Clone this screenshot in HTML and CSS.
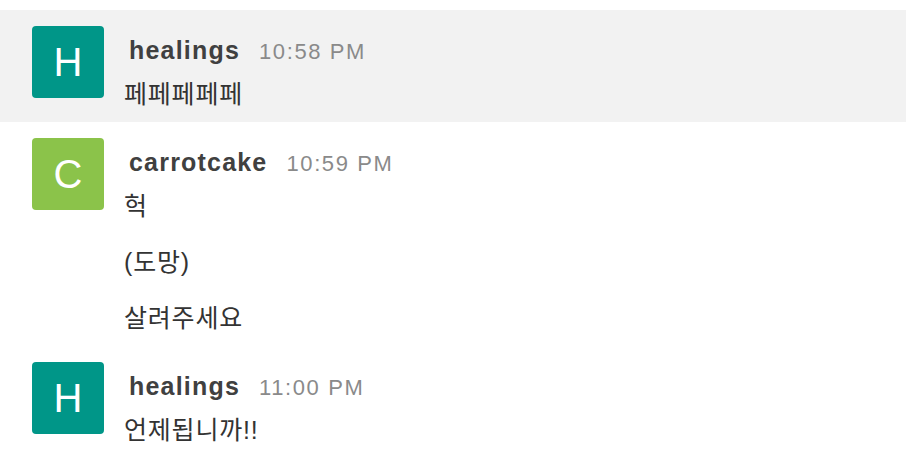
FILE: index.html
```html
<!DOCTYPE html>
<html lang="ko">
<head>
<meta charset="utf-8">
<link rel="stylesheet" href="styles.css">
</head>
<body>
<div class="feed">
  <div class="group hover">
    <div class="avatar teal">H</div>
    <div class="content">
      <div class="header"><span class="name">healings</span><span class="time">10:58 PM</span></div>
      <div class="line">페페페페페</div>
    </div>
  </div>
  <div class="group">
    <div class="avatar green">C</div>
    <div class="content">
      <div class="header"><span class="name">carrotcake</span><span class="time">10:59 PM</span></div>
      <div class="line">헉</div>
      <div class="line">(도망)</div>
      <div class="line">살려주세요</div>
    </div>
  </div>
  <div class="group">
    <div class="avatar teal">H</div>
    <div class="content">
      <div class="header"><span class="name">healings</span><span class="time">11:00 PM</span></div>
      <div class="line">언제됩니까!!</div>
    </div>
  </div>
</div>
</body>
</html>
```
FILE: styles.css
```css
html, body {
  margin: 0;
  padding: 0;
  background: #ffffff;
}
body {
  font-family: "Liberation Sans", "Noto Sans CJK KR", sans-serif;
  color: #333333;
}
.feed {
  padding-top: 10px;
}
.group {
  display: flex;
  gap: 20px;
  padding: 16px 0 8px 32px;
}
.group.hover {
  background: #f2f2f2;
}
.avatar {
  flex: 0 0 72px;
  width: 72px;
  height: 72px;
  border-radius: 4px;
  color: #ffffff;
  font-size: 40px;
  line-height: 72px;
  text-align: center;
}
.avatar.teal { background: #009688; }
.avatar.green { background: #8bc34a; }
.content {
  flex: 1;
}
.header {
  height: 48px;
  line-height: 48px;
  white-space: nowrap;
}
.name {
  font-weight: bold;
  font-size: 25px;
  letter-spacing: 1.2px;
  color: #404040;
  padding-left: 5px;
}
.time {
  font-size: 22px;
  letter-spacing: 1.6px;
  color: #8a8a8a;
  margin-left: 19px;
}
.line {
  font-size: 25px;
  letter-spacing: 0.8px;
  line-height: 40px;
  color: #333333;
}
.line + .line {
  margin-top: 16px;
}
```
